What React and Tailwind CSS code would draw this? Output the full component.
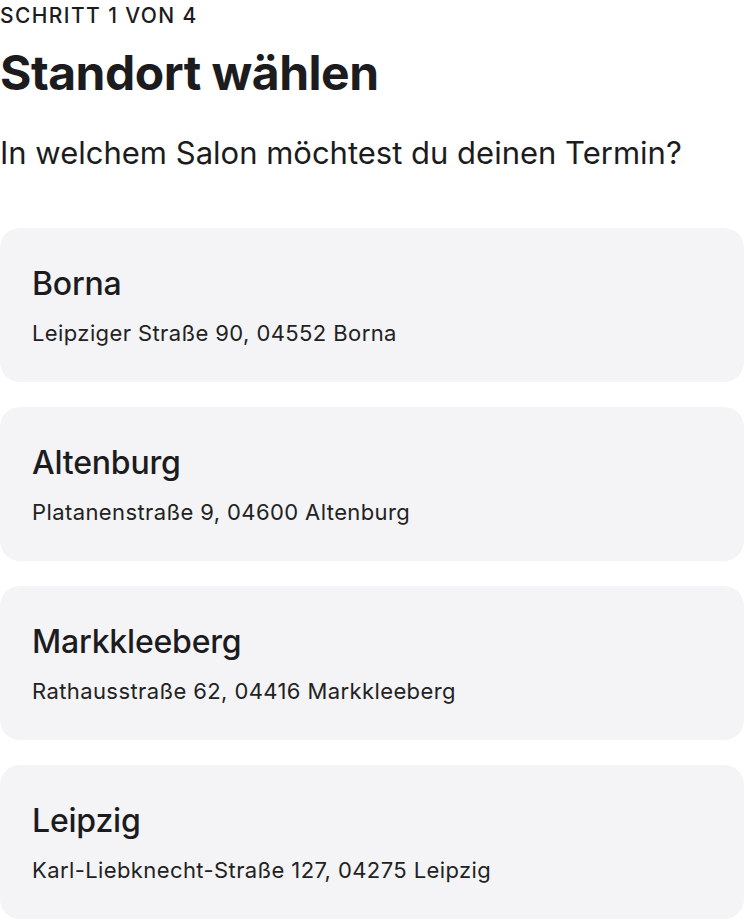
import React from 'react';

const salons = [
  { name: 'Borna', address: 'Leipziger Straße 90, 04552 Borna' },
  { name: 'Altenburg', address: 'Platanenstraße 9, 04600 Altenburg' },
  { name: 'Markkleeberg', address: 'Rathausstraße 62, 04416 Markkleeberg' },
  { name: 'Leipzig', address: 'Karl-Liebknecht-Straße 127, 04275 Leipzig' },
];

const SalonCard = ({ name, address }) => (
  <button className="w-full text-left bg-[#f4f4f6] rounded-[20px] px-8 pt-[38px] pb-[35px] flex flex-col gap-[17px]">
    <span className="text-[32px] leading-[36px] font-medium text-[#1c1c1e] tracking-[-0.2px]">{name}</span>
    <span className="text-[22px] leading-[28px] text-[#222] tracking-[0.4px]">{address}</span>
  </button>
);

export default function App() {
  return (
    <div className="w-[744px] bg-white font-['Inter',sans-serif] text-[#1c1c1e]">
      <p className="text-[21px] leading-[24px] font-medium tracking-[1.4px] pt-[4px]">SCHRITT 1 VON 4</p>
      <h1 className="text-[48px] leading-[56px] font-bold tracking-[-0.5px] mt-[17px]">Standort wählen</h1>
      <p className="text-[31px] leading-[40px] mt-[32px]">In welchem Salon möchtest du deinen Termin?</p>
      <div className="flex flex-col gap-[25px] mt-[55px]">
        {salons.map((s) => (
          <SalonCard key={s.name} {...s} />
        ))}
      </div>
    </div>
  );
}
